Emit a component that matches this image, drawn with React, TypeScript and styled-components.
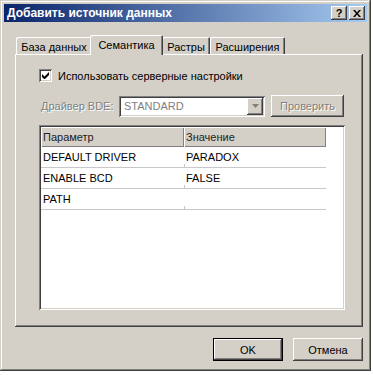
import * as React from "react";
import styled, { createGlobalStyle } from "styled-components";

const Global = createGlobalStyle`
  html, body {
    margin: 0;
    padding: 0;
    background: #ffffff;
  }
  body {
    font-family: "Liberation Sans", Arial, sans-serif;
    font-size: 11px;
    color: #000;
  }
`;

const face = "#d4d0c8";
const raised = `inset -1px -1px #404040, inset 1px 1px #ffffff, inset -2px -2px #808080, inset 2px 2px ${face}`;
const sunken = `inset 1px 1px #808080, inset -1px -1px #ffffff, inset 2px 2px #404040, inset -2px -2px ${face}`;

const Window = styled.div`
  width: 371px;
  height: 371px;
  box-sizing: border-box;
  padding: 4px;
  background: ${face};
  box-shadow: inset -1px -1px #404040, inset 1px 1px ${face}, inset -2px -2px #808080, inset 2px 2px #ffffff;
  display: flex;
  flex-direction: column;
`;

const TitleBar = styled.div`
  height: 18px;
  background: linear-gradient(to right, #0a246a, #a6caf0);
  display: flex;
  align-items: center;
  justify-content: space-between;
  padding: 0 2px 0 3px;
`;

const Title = styled.span`
  color: #fff;
  font-weight: bold;
  font-size: 12px;
`;

const CaptionButtons = styled.div`
  display: flex;
  gap: 2px;
`;

const CaptionButton = styled.div`
  width: 16px;
  height: 14px;
  box-sizing: border-box;
  background: ${face};
  box-shadow: ${raised};
  display: flex;
  align-items: center;
  justify-content: center;
  font-weight: bold;
  font-size: 11px;
  line-height: 1;
`;

const Body = styled.div`
  flex: 1;
  display: flex;
  flex-direction: column;
  padding: 13px 4px 0 11px;
`;

const TabStrip = styled.div`
  display: flex;
  align-items: flex-end;
  padding-left: 1px;
  height: 19px;
  position: relative;
  z-index: 1;
`;

const Tab = styled.div<{ $active?: boolean; $w: number }>`
  width: ${(p) => p.$w}px;
  height: ${(p) => (p.$active ? 20 : 17)}px;
  margin: ${(p) => (p.$active ? "0 -1px -1px -2px" : "0")};
  box-sizing: border-box;
  background: ${face};
  border-radius: 2px 2px 0 0;
  box-shadow: inset 1px 1px #ffffff, inset -1px 0 #404040, inset -2px 0 #808080;
  display: flex;
  align-items: center;
  justify-content: center;
  padding-top: ${(p) => (p.$active ? 0 : 2)}px;
  white-space: nowrap;
  position: relative;
  z-index: ${(p) => (p.$active ? 2 : 0)};
`;

const Panel = styled.div`
  height: 273px;
  box-sizing: border-box;
  box-shadow: ${raised};
  padding: 15px 16px 0 24px;
  display: flex;
  flex-direction: column;
`;

const CheckRow = styled.label`
  display: flex;
  align-items: center;
  gap: 6px;
  height: 13px;
`;

const CheckBox = styled.span`
  width: 13px;
  height: 13px;
  box-sizing: border-box;
  background: #fff;
  box-shadow: ${sunken};
  display: flex;
  align-items: center;
  justify-content: center;
`;

const DriverRow = styled.div`
  display: flex;
  align-items: center;
  margin-top: 13px;
  height: 22px;
`;

const Disabled = styled.span`
  color: #808080;
  text-shadow: 1px 1px #ffffff;
  white-space: nowrap;
`;

const Label = styled(Disabled)`
  width: 80px;
  flex-shrink: 0;
  padding-left: 2px;
  box-sizing: border-box;
`;

const Combo = styled.div`
  width: 146px;
  height: 21px;
  flex-shrink: 0;
  box-sizing: border-box;
  background: #fff;
  box-shadow: ${sunken};
  display: flex;
  align-items: center;
  padding: 2px;
`;

const ComboText = styled.span`
  flex: 1;
  padding-left: 3px;
  color: #808080;
`;

const ComboArrow = styled.div`
  width: 16px;
  height: 17px;
  box-sizing: border-box;
  background: ${face};
  box-shadow: ${raised};
  display: flex;
  align-items: center;
  justify-content: center;
`;

const Button = styled.div<{ $default?: boolean; $w: number }>`
  width: ${(p) => p.$w}px;
  height: 23px;
  flex-shrink: 0;
  box-sizing: border-box;
  background: ${face};
  box-shadow: ${(p) =>
    p.$default
      ? `inset 0 0 0 1px #000, inset -2px -2px #404040, inset 2px 2px #ffffff, inset -3px -3px #808080`
      : raised};
  display: flex;
  align-items: center;
  justify-content: center;
`;

const CheckButton = styled(Button)`
  margin-left: 6px;
  height: 22px;
`;

const Grid = styled.div`
  margin-top: 8px;
  width: 306px;
  height: 185px;
  box-sizing: border-box;
  background: #fff;
  box-shadow: ${sunken};
  padding: 2px;
`;

const Row = styled.div<{ $header?: boolean }>`
  display: flex;
  width: 285px;
  height: ${(p) => (p.$header ? 20 : 21)}px;
  box-sizing: border-box;
  background: ${(p) => (p.$header ? face : "#fff")};
  border-bottom: ${(p) => (p.$header ? "none" : "1px solid #c8c8c8")};
`;

const HeadCell = styled.div<{ $w: number }>`
  width: ${(p) => p.$w}px;
  box-sizing: border-box;
  box-shadow: inset 1px 1px #ffffff, inset -1px -1px #808080;
  display: flex;
  align-items: center;
  padding-left: 2px;
  color: #222;
`;

const Cell = styled.div<{ $w: number; $tick?: boolean }>`
  width: ${(p) => p.$w}px;
  box-sizing: border-box;
  display: flex;
  align-items: center;
  padding-left: 2px;
  position: relative;
  &::before {
    content: "";
    display: ${(p) => (p.$tick ? "block" : "none")};
    position: absolute;
    left: 0;
    bottom: 0;
    width: 1px;
    height: 3px;
    background: #c8c8c8;
  }
`;

const Footer = styled.div`
  display: flex;
  justify-content: flex-end;
  gap: 10px;
  margin-top: 11px;
`;

const rows = [
  ["DEFAULT DRIVER", "PARADOX"],
  ["ENABLE BCD", "FALSE"],
  ["PATH", ""],
];

export default function App() {
  return (
    <>
      <Global />
      <Window>
        <TitleBar>
          <Title>Добавить источник данных</Title>
          <CaptionButtons>
            <CaptionButton>?</CaptionButton>
            <CaptionButton>
              <svg width="8" height="7" viewBox="0 0 8 7">
                <path d="M0 0h2l2 2.5L6 0h2L5 3.5 8 7H6L4 4.5 2 7H0l3-3.5z" fill="#000" />
              </svg>
            </CaptionButton>
          </CaptionButtons>
        </TitleBar>
        <Body>
          <TabStrip>
            <Tab $w={76}>База данных</Tab>
            <Tab $w={73} $active>Семантика</Tab>
            <Tab $w={48}>Растры</Tab>
            <Tab $w={75}>Расширения</Tab>
          </TabStrip>
          <Panel>
            <CheckRow>
              <CheckBox>
                <svg width="7" height="7" viewBox="0 0 7 7">
                  <path d="M0 2v3l2 2h1l4-4V0L2.5 4.5z" fill="#000" />
                </svg>
              </CheckBox>
              Использовать серверные настройки
            </CheckRow>
            <DriverRow>
              <Label>Драйвер BDE:</Label>
              <Combo>
                <ComboText>STANDARD</ComboText>
                <ComboArrow>
                  <svg width="7" height="4" viewBox="0 0 7 4">
                    <path d="M0 0h7L3.5 4z" fill="#808080" />
                  </svg>
                </ComboArrow>
              </Combo>
              <CheckButton $w={73}>
                <Disabled>Проверить</Disabled>
              </CheckButton>
            </DriverRow>
            <Grid>
              <Row $header>
                <HeadCell $w={143}>Параметр</HeadCell>
                <HeadCell $w={142}>Значение</HeadCell>
              </Row>
              {rows.map(([k, v]) => (
                <Row key={k}>
                  <Cell $w={143}>{k}</Cell>
                  <Cell $w={142} $tick>
                    {v}
                  </Cell>
                </Row>
              ))}
            </Grid>
          </Panel>
          <Footer>
            <Button $w={70} $default>
              OK
            </Button>
            <Button $w={70}>Отмена</Button>
          </Footer>
        </Body>
      </Window>
    </>
  );
}
